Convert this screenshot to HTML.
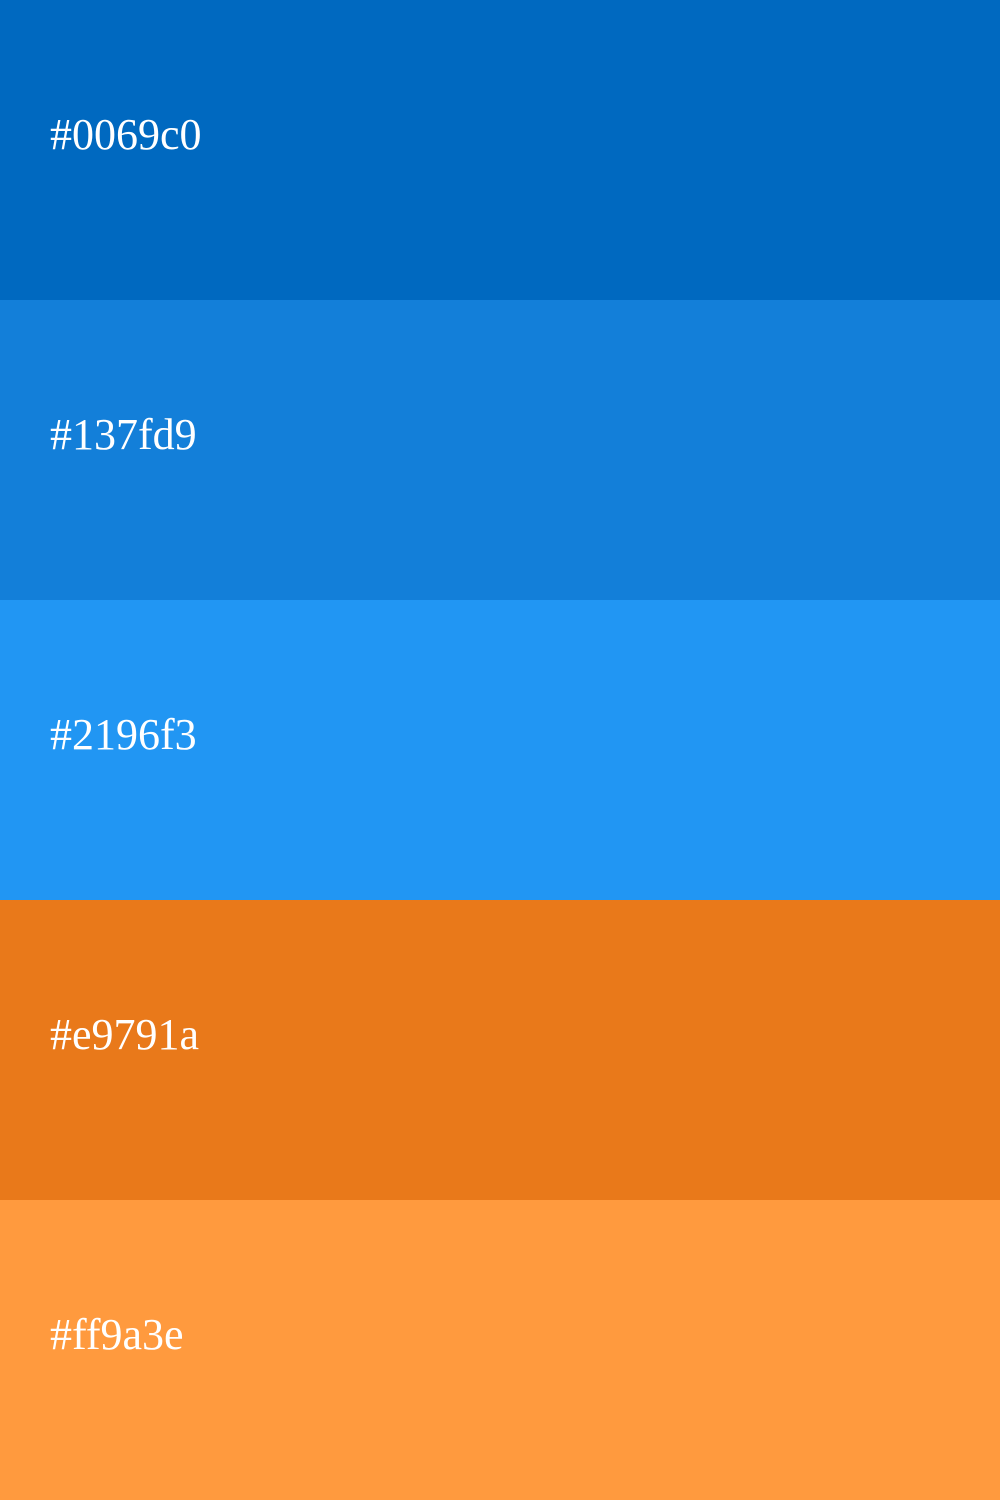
<!DOCTYPE html>
<html><head><style>
html,body{margin:0;padding:0;width:1000px;height:1500px;overflow:hidden}
div{height:300px;position:relative}
span{position:absolute;left:50px;top:110px;font-family:"Liberation Serif",serif;font-size:44px;color:#fff;line-height:50px}
</style></head><body>
<div style="background:#0069c0"><span>#0069c0</span></div>
<div style="background:#137fd9"><span>#137fd9</span></div>
<div style="background:#2196f3"><span>#2196f3</span></div>
<div style="background:#e9791a"><span>#e9791a</span></div>
<div style="background:#ff9a3e"><span>#ff9a3e</span></div>
</body></html>
